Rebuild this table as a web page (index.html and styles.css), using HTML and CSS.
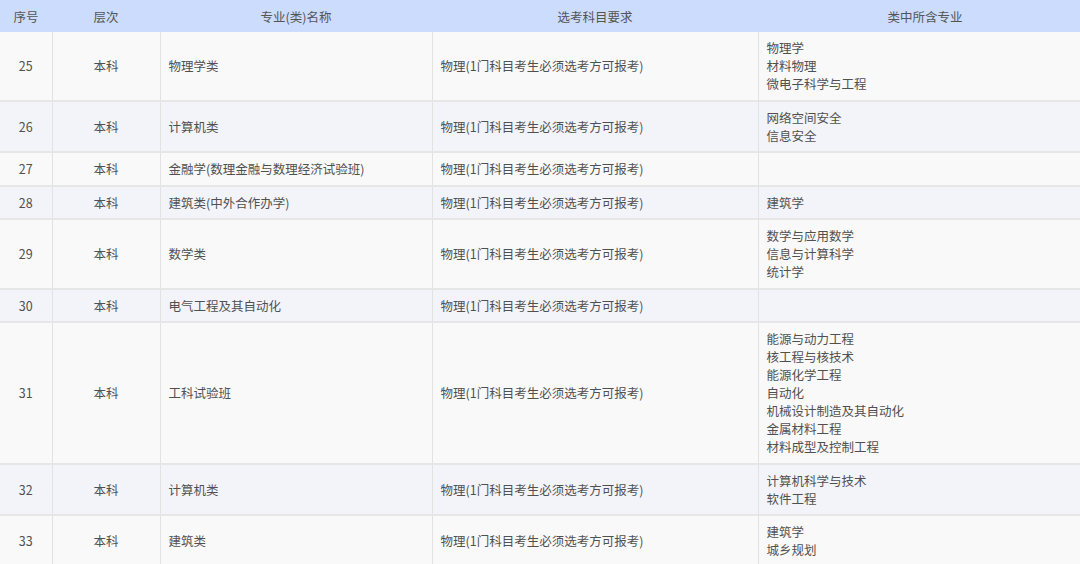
FILE: index.html
```html
<!DOCTYPE html>
<html lang="zh">
<head>
<meta charset="utf-8">
<link rel="stylesheet" href="styles.css">
</head>
<body>
<div class="wrap">
<table class="tbl">
<colgroup>
<col class="c1"><col class="c2"><col class="c3"><col class="c4"><col class="c5">
</colgroup>
<thead>
<tr><th>序号</th><th>层次</th><th>专业(类)名称</th><th>选考科目要求</th><th>类中所含专业</th></tr>
</thead>
<tbody>
<tr><td class="ctr">25</td><td class="ctr">本科</td><td>物理学类</td><td>物理(1门科目考生必须选考方可报考)</td><td>物理学<br>材料物理<br>微电子科学与工程</td></tr>
<tr><td class="ctr">26</td><td class="ctr">本科</td><td>计算机类</td><td>物理(1门科目考生必须选考方可报考)</td><td>网络空间安全<br>信息安全</td></tr>
<tr><td class="ctr">27</td><td class="ctr">本科</td><td>金融学(数理金融与数理经济试验班)</td><td>物理(1门科目考生必须选考方可报考)</td><td></td></tr>
<tr><td class="ctr">28</td><td class="ctr">本科</td><td>建筑类(中外合作办学)</td><td>物理(1门科目考生必须选考方可报考)</td><td>建筑学</td></tr>
<tr><td class="ctr">29</td><td class="ctr">本科</td><td>数学类</td><td>物理(1门科目考生必须选考方可报考)</td><td>数学与应用数学<br>信息与计算科学<br>统计学</td></tr>
<tr><td class="ctr">30</td><td class="ctr">本科</td><td>电气工程及其自动化</td><td>物理(1门科目考生必须选考方可报考)</td><td></td></tr>
<tr><td class="ctr">31</td><td class="ctr">本科</td><td>工科试验班</td><td>物理(1门科目考生必须选考方可报考)</td><td>能源与动力工程<br>核工程与核技术<br>能源化学工程<br>自动化<br>机械设计制造及其自动化<br>金属材料工程<br>材料成型及控制工程</td></tr>
<tr><td class="ctr">32</td><td class="ctr">本科</td><td>计算机类</td><td>物理(1门科目考生必须选考方可报考)</td><td>计算机科学与技术<br>软件工程</td></tr>
<tr><td class="ctr">33</td><td class="ctr">本科</td><td>建筑类</td><td>物理(1门科目考生必须选考方可报考)</td><td>建筑学<br>城乡规划</td></tr>
</tbody>
</table>
</div>
</body>
</html>
```

FILE: styles.css
```css
html, body {
  margin: 0;
  padding: 0;
  background: #f9f9f9;
}
.wrap {
  width: 1080px;
  height: 564px;
  overflow: hidden;
}
.tbl {
  width: 1092px;
  border-collapse: collapse;
  table-layout: fixed;
  font-family: "Noto Sans CJK SC", "Open Sans", sans-serif;
  font-size: 12.5px;
  color: #505050;
}
.c1 { width: 52px; }
.c2 { width: 108px; }
.c3 { width: 272px; }
.c4 { width: 326px; }
.c5 { width: 334px; }
.tbl th {
  background: #cbdcfc;
  height: 32px;
  padding: 0;
  font-weight: normal;
  text-align: center;
  vertical-align: middle;
  color: #555;
}
.tbl td {
  padding: 7px 8px 6.5px;
  line-height: 18px;
  vertical-align: middle;
  text-align: left;
  border-left: 1px solid #e2e2e2;
  border-bottom: 2px solid #e6e6e6;
}
.tbl td:first-child { border-left: none; }
.tbl td.ctr { text-align: center; }
.tbl tbody tr:nth-child(odd) td { background: #f9f9f9; }
.tbl tbody tr:nth-child(even) td { background: #f3f4f9; }
```
